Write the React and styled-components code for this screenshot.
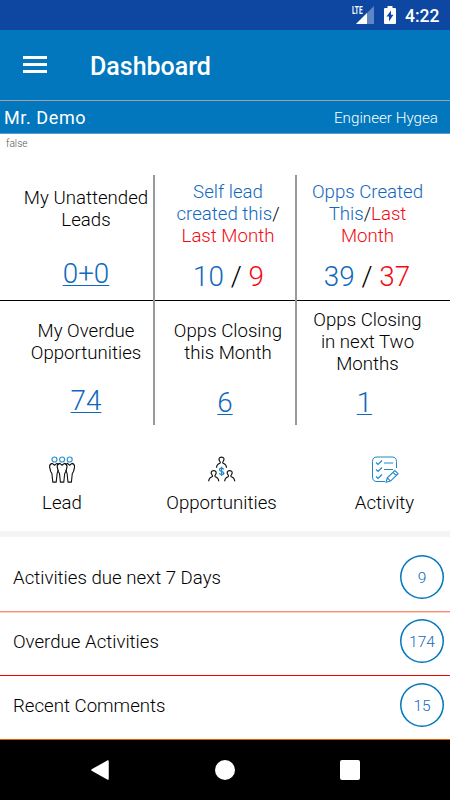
import styled, { createGlobalStyle } from "styled-components";

const BLUE = "#0277bd";
const LINK = "#1168bd";
const RED = "#f20a12";

const STATS = [
  { title: ["My Unattended", "Leads"], value: "0+0", link: true, top: 12, bottom: 11 },
  {
    title: ["Self lead", "created this", "Last Month"],
    compare: true,
    value: "10",
    last: "9",
    top: 6,
    bottom: 8,
    nudge: -1,
  },
  {
    title: ["Opps Created", "This", "Last", "Month"],
    compare: true,
    value: "39",
    last: "37",
    top: 6,
    bottom: 8,
    nudge: 1,
  },
  { title: ["My Overdue", "Opportunities"], value: "74", link: true, top: 19, bottom: 8 },
  { title: ["Opps Closing", "this Month"], value: "6", link: true, top: 19, bottom: 6, nudge: 6 },
  {
    title: ["Opps Closing", "in next Two", "Months"],
    value: "1",
    link: true,
    top: 8,
    bottom: 6,
    nudge: 6,
  },
];

const ROWS = [
  { label: "Activities due next 7 Days", count: 9, height: 76, line: "#f58d73", shade: "#fcd0c4" },
  { label: "Overdue Activities", count: 174, height: 63, line: "#f00000" },
  { label: "Recent Comments", count: 15, height: 64, line: "#f65300" },
];

const LeadIcon = () => (
  <svg width="26" height="28" viewBox="0 0 26 28" fill="none">
    <g stroke="#2a91d4" strokeWidth="1.2">
      <circle cx="5.5" cy="3.5" r="2.5" />
      <circle cx="13.1" cy="3.5" r="2.5" />
      <circle cx="20.7" cy="3.5" r="2.5" />
    </g>
    <g
      transform="translate(-0.3 0)"
      stroke="#111"
      strokeWidth="1.1"
      strokeLinejoin="round"
      strokeLinecap="round"
    >
      <path d="M3.5 7.4C1.4 7.8.8 9 .9 11L2 15.5l1.2 2 .9 8.6h3.4l.9-8.4 1.1-3.4M3.5 7.4l2.3 1.8 2.4-1.8 1.4 1" />
      <path d="M11.1 7.4C9 7.8 8.4 9 8.5 11l1.1 4.5 1.2 2 .9 8.6h3.4l.9-8.6 1.2-2L18.3 11c.1-2-.5-3.2-2.6-3.6l-2.3 1.8Z" />
      <path d="M18.7 7.4l2.3 1.8 2.3-1.8c2.1.4 2.7 1.6 2.6 3.6l-1.1 4.5-1.2 2-.9 8.6h-3.4l-.9-8.4-1.1-3.4M18.7 7.4l-1.4 1" />
    </g>
  </svg>
);

const Person = ({ x, y }) => (
  <path
    transform={`translate(${x} ${y})`}
    d="M0 11.3c0-3 1-3.8 3.4-4.6.5-.3.5-1 0-1.7C1.6 2.5 2.6.6 5 .6S8.4 2.5 6.6 5c-.5.7-.5 1.4 0 1.7C9 7.5 10 8.3 10 11.3"
  />
);

const OpportunityIcon = () => (
  <svg width="28" height="28" viewBox="0 0 28 28" fill="none">
    <g stroke="#111" strokeWidth="1.2">
      <Person x={8.5} y={0.5} />
      <Person x={0.7} y={14} />
      <Person x={16.7} y={14} />
    </g>
    <path
      d="M15.7 13.5c-.3-1-1-1.4-2.1-1.4-1.2 0-2 .6-2 1.6 0 2.3 4.2 1 4.2 3.3 0 1-.9 1.6-2.2 1.6-1.2 0-2-.5-2.2-1.6M13.6 10.8v9.1"
      stroke="#2389ca"
      strokeWidth="1.3"
    />
  </svg>
);

const ActivityIcon = () => (
  <svg width="28" height="28" viewBox="0 0 28 28" fill="none" stroke="#2187c9" strokeWidth="1">
    <path d="M25.5 12V5.5c0-3-1.5-4.5-4.5-4.5H6C3 1 1.5 2.5 1.5 5.5V21c0 3 1.5 4.5 4.5 4.5h8" />
    <path d="M5 6.5l2 2 4-4M5 13.5l2 2 4-4M5 20.5l2 2 4-4" strokeWidth="1.2" />
    <path d="M13 7h9M13 13.5h9" strokeWidth="1.2" />
    <path
      d="M15 26.3l1.3-4.5 7.5-7.3 3.3 3.2-7.6 7.4Zm1.3-4.5 3.2 3.3M22 16.3l3.3 3.2"
      strokeWidth="1.1"
    />
  </svg>
);

const SHORTCUTS = [
  { label: "Lead", Icon: LeadIcon, width: 124 },
  { label: "Opportunities", Icon: OpportunityIcon, width: 195 },
  { label: "Activity", Icon: ActivityIcon, width: 131 },
];

function StatTitle({ title, compare }) {
  if (!compare) {
    return title.map((line) => <div key={line}>{line}</div>);
  }
  const [first, current, last, rest] = title;
  return (
    <>
      <Tint color={LINK}>{first}</Tint>
      <br />
      <Tint color={LINK}>{current}</Tint>/{!rest && <br />}
      <Tint color={RED}>{last}</Tint>
      {rest && (
        <>
          <br />
          <Tint color={RED}>{rest}</Tint>
        </>
      )}
    </>
  );
}

function App() {
  return (
    <Screen>
      <GlobalStyle />
      <StatusBar>
        <Signal>
          <Lte>LTE</Lte>
          <svg width="18" height="18" viewBox="0 0 18 18">
            <path d="M18 0v18H0Z" fill="#5f86c5" />
            <path d="M11 7v11H0Z" fill="#fff" />
          </svg>
        </Signal>
        <svg width="12" height="18" viewBox="0 0 12 18">
          <path d="M3.5 0h5v2H11q1 0 1 1v14q0 1-1 1H1q-1 0-1-1V3q0-1 1-1h2.5Z" fill="#fff" />
          <path d="M7 4.5 2.5 10.5H5V15.5L9.5 8.8H7Z" fill="#0d47a1" />
        </svg>
        <Clock>4:22</Clock>
      </StatusBar>
      <AppBar>
        <MenuButton aria-label="Menu">
          <MenuLine />
          <MenuLine />
          <MenuLine />
        </MenuButton>
        <PageTitle>Dashboard</PageTitle>
      </AppBar>
      <UserBar>
        <UserName>Mr. Demo</UserName>
        <UserRole>Engineer Hygea</UserRole>
      </UserBar>
      <Flag>false</Flag>
      <StatGrid>
        {STATS.map((stat, i) => (
          <StatCell
            key={i}
            top={stat.top}
            bottom={stat.bottom}
            col={i % 3}
            divided={i < 3}
          >
            <StatName>
              <StatTitle title={stat.title} compare={stat.compare} />
            </StatName>
            {stat.link ? (
              <StatLink nudge={stat.nudge}>{stat.value}</StatLink>
            ) : (
              <StatValue nudge={stat.nudge}>
                <Tint color={LINK}>{stat.value}</Tint> / <Tint color={RED}>{stat.last}</Tint>
              </StatValue>
            )}
          </StatCell>
        ))}
      </StatGrid>
      <Shortcuts>
        {SHORTCUTS.map(({ label, Icon, width }) => (
          <Shortcut key={label} width={width}>
            <Icon />
            <span>{label}</span>
          </Shortcut>
        ))}
      </Shortcuts>
      <Separator />
      {ROWS.map((row) => (
        <ListRow key={row.label} height={row.height} line={row.line} shade={row.shade}>
          <RowLabel>{row.label}</RowLabel>
          <Count>{row.count}</Count>
        </ListRow>
      ))}
      <NavBar>
        <svg width="20" height="20" viewBox="0 0 20 20">
          <path
            d="M18 1v18L2 10Z"
            fill="#fff"
            stroke="#fff"
            strokeWidth="1.5"
            strokeLinejoin="round"
          />
        </svg>
        <HomeKey />
        <RecentKey />
      </NavBar>
    </Screen>
  );
}

export default App;

const GlobalStyle = createGlobalStyle`
  * {
    box-sizing: border-box;
  }

  body {
    margin: 0;
    background: #fff;
  }

  svg {
    display: block;
    flex: none;
  }
`;

const Screen = styled.div`
  width: 450px;
  height: 800px;
  display: flex;
  flex-direction: column;
  overflow: hidden;
  background: #fff;
  color: #000;
  font-family: Roboto, sans-serif;
  font-weight: 300;
  font-size: 18.65px;
  line-height: 22px;
`;

const StatusBar = styled.div`
  height: 30px;
  flex: none;
  display: flex;
  align-items: center;
  justify-content: flex-end;
  padding-right: 10px;
  background: #0d47a1;
  color: #fff;
`;

const Signal = styled.div`
  display: flex;
  align-items: flex-end;
  position: relative;
  margin-right: 10px;
`;

const Lte = styled.span`
  position: absolute;
  left: -4.5px;
  top: -1px;
  font-size: 11px;
  font-weight: 700;
  line-height: 11px;
  transform: scaleX(0.6);
  transform-origin: left;
`;

const Clock = styled.span`
  width: 35px;
  margin-left: 9px;
  padding-top: 1px;
  font-size: 17.5px;
  font-weight: 500;
  white-space: nowrap;
`;

const AppBar = styled.div`
  height: 71px;
  flex: none;
  display: flex;
  align-items: center;
  padding: 1px 0 0 23px;
  background: ${BLUE};
  border-bottom: 1px solid #9f9fa5;
`;

const MenuButton = styled.button`
  display: flex;
  flex-direction: column;
  gap: 4px;
  width: 24px;
  padding: 0;
  margin-top: -2px;
  border: none;
  background: none;
`;

const MenuLine = styled.span`
  height: 3px;
  background: #fff;
`;

const PageTitle = styled.h1`
  margin: 2px 0 0 43px;
  color: #fff;
  font-size: 25px;
  font-weight: 500;
  line-height: 30px;
`;

const UserBar = styled.div`
  height: 33px;
  flex: none;
  display: flex;
  align-items: center;
  justify-content: space-between;
  padding: 1px 12px 0 4px;
  background: ${BLUE};
  border-bottom: 1px solid #5b9bd0;
  color: #fff;
`;

const UserName = styled.span`
  font-size: 18px;
  font-weight: 400;
  letter-spacing: 0.6px;
`;

const UserRole = styled.span`
  font-size: 15.2px;
`;

const Flag = styled.div`
  height: 41px;
  flex: none;
  padding-left: 6px;
  color: #555;
  font-size: 10.2px;
  line-height: 20px;
`;

const StatGrid = styled.div`
  flex: none;
  display: grid;
  grid-template-columns: 155px 142px 153px;
  grid-template-rows: 126px 124px;
`;

const StatCell = styled.div`
  display: flex;
  flex-direction: column;
  align-items: center;
  justify-content: space-between;
  padding: ${(props) => props.top}px ${(props) => [0, 0, 12][props.col]}px
    ${(props) => props.bottom}px ${(props) => [17, 4, 0][props.col]}px;
  background:
    linear-gradient(#999, #999) right / ${(props) => (props.col < 2 ? 2 : 0)}px 100% no-repeat,
    linear-gradient(#000, #000) bottom / 100% ${(props) => (props.divided ? 1 : 0)}px no-repeat;
`;

const StatName = styled.div`
  text-align: center;
  white-space: nowrap;
`;

const StatValue = styled.div`
  margin-right: ${(props) => props.nudge || 0}px;
  font-size: 27.8px;
  line-height: 33px;
`;

const StatLink = styled(StatValue)`
  color: ${LINK};
  text-decoration: underline;
  text-decoration-thickness: 1px;
  text-underline-offset: 2px;
`;

const Tint = styled.span`
  color: ${(props) => props.color};
`;

const Shortcuts = styled.div`
  height: 106px;
  flex: none;
  display: flex;
  padding-top: 31px;
`;

const Shortcut = styled.div`
  width: ${(props) => props.width}px;
  display: flex;
  flex-direction: column;
  align-items: center;
  gap: 8px;
`;

const Separator = styled.div`
  height: 6px;
  flex: none;
  background: #f4f4f4;
`;

const ListRow = styled.div`
  height: ${(props) => props.height}px;
  flex: none;
  display: flex;
  align-items: flex-end;
  justify-content: space-between;
  padding: 0 6px ${(props) => (props.shade ? 13 : 12)}px 13px;
  border-bottom: 1px solid ${(props) => props.shade || props.line};
  box-shadow: ${(props) => (props.shade ? `inset 0 -1px ${props.line}` : "none")};
`;

const RowLabel = styled.span`
  line-height: 42px;
`;

const Count = styled.span`
  width: 44px;
  height: 44px;
  display: flex;
  align-items: center;
  justify-content: center;
  padding-top: 1px;
  border-radius: 50%;
  box-shadow: inset 0 0 0 1.5px ${BLUE};
  color: ${LINK};
  font-size: 15.5px;
`;

const NavBar = styled.div`
  height: 60px;
  flex: none;
  display: flex;
  align-items: center;
  justify-content: space-between;
  padding: 0 90px;
  background: #000;
`;

const HomeKey = styled.span`
  width: 20px;
  height: 20px;
  border-radius: 50%;
  background: #fff;
`;

const RecentKey = styled.span`
  width: 20px;
  height: 20px;
  border-radius: 2px;
  background: #fff;
`;
